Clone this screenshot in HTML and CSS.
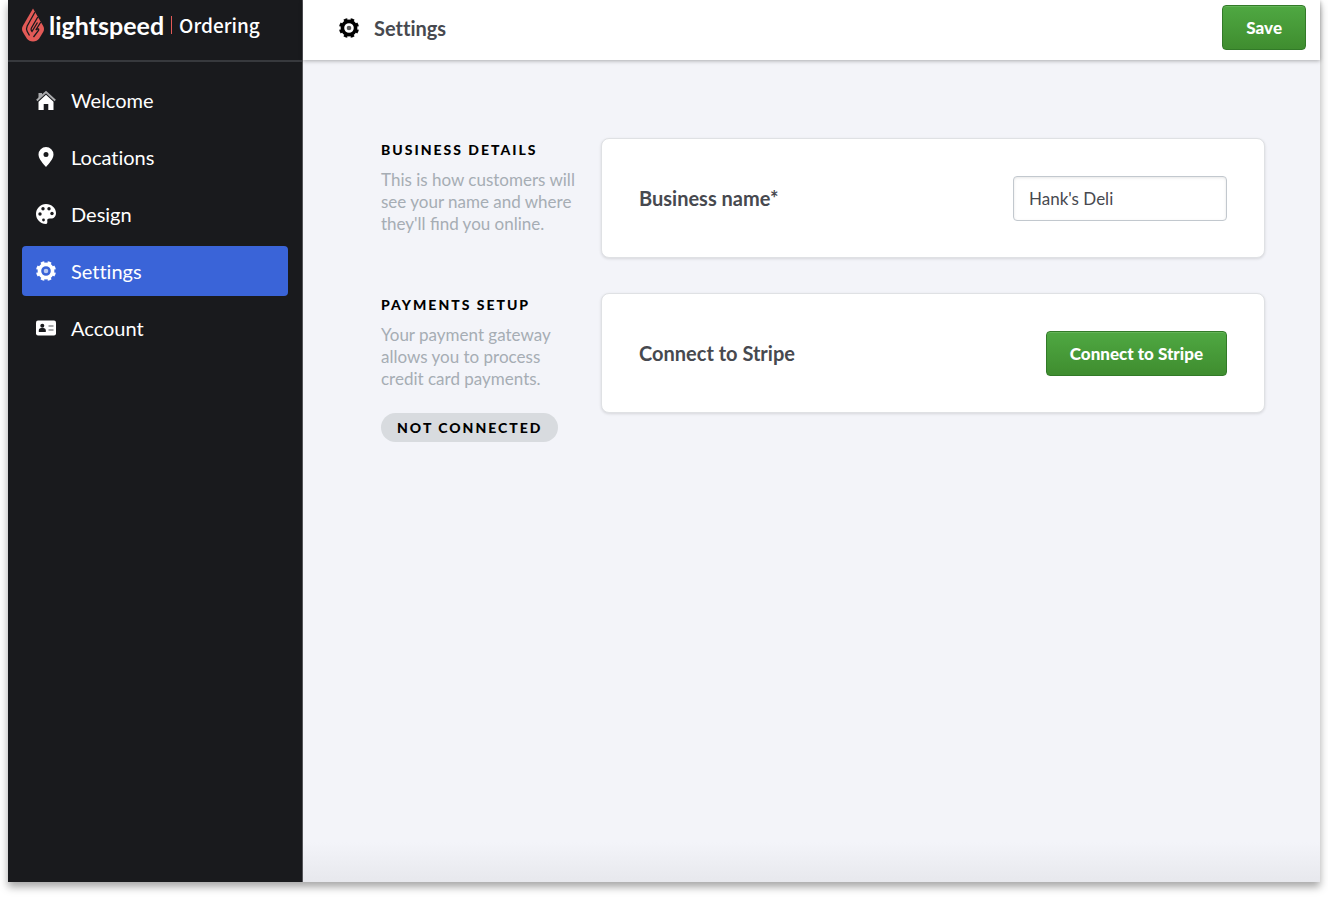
FILE: index.html
```html
<!DOCTYPE html>
<html lang="en">
<head>
<meta charset="utf-8">
<meta name="viewport" content="width=device-width, initial-scale=1">
<title>Settings - Lightspeed Ordering</title>
<link rel="stylesheet" href="styles.css">
</head>
<body>
<svg class="sprite" aria-hidden="true">
  <symbol id="gear" viewBox="0 0 20 20">
    <g fill="none" stroke="currentColor">
      <circle cx="10" cy="10" r="6.600" stroke-width="3.600"/>
      <circle cx="10" cy="10" r="8.700" stroke-width="2.600" pathLength="16" stroke-dasharray="1.050 .95" stroke-dashoffset="-.475"/>
    </g>
    <circle cx="10" cy="10" r="2.300" fill="currentColor" opacity=".65"/>
  </symbol>
</svg>
<div class="app">
  <aside class="sidebar">
    <a class="brand" href="#" aria-label="lightspeed Ordering">
      <svg class="flame" viewBox="0 0 22 34" aria-hidden="true">
        <path d="M11 .5 .8 18Q-.8 21 .8 24L4.800 30.500Q7 33.500 11 33.500T17.200 30.500L21.200 24Q22.800 21 21.200 18Z" fill="#e35a57"/>
        <path d="M13 4 5.200 18Q3.800 21 5.200 23.500L7.500 27.500M15.800 9 9.300 20.300Q8.500 22 10 23.500L15.500 14.500M18.800 14 13.800 22Q17.500 19.500 16.500 22.500L11.500 29" fill="none" stroke="#191a1d" stroke-width="1.300"/>
      </svg>
      <span class="wordmark">lightspeed</span>
      <span class="product">Ordering</span>
    </a>
    <nav class="nav" aria-label="Main">
      <a class="nav-item" href="#">
        <svg class="icon" viewBox="0 0 20 20" aria-hidden="true"><path d="M2.500 3H6v3L2.500 9Z" fill="#a9aaac"/><path d="M.8 10.500 10 2l9.200 8.500" fill="none" stroke="#a9aaac" stroke-width="2"/><path d="m10 4.800 7.500 7V20h-5.200v-6H7.700v6H2.500v-8.200Z" fill="#fff"/></svg>
        Welcome
      </a>
      <a class="nav-item" href="#">
        <svg class="icon" viewBox="0 0 20 20" aria-hidden="true"><path fill="#fff" fill-rule="evenodd" d="M10 0a7.500 7.500 0 0 1 7.500 7.500C17.500 12 12.500 17 10 20 7.500 17 2.500 12 2.500 7.500A7.500 7.500 0 0 1 10 0Zm0 5a2.500 2.500 0 1 0 0 5 2.500 2.500 0 0 0 0-5Z"/></svg>
        Locations
      </a>
      <a class="nav-item" href="#">
        <svg class="icon" viewBox="0 0 20 20" aria-hidden="true"><path fill="#fff" d="M10 0C15.500 0 20 4 20 9c0 3.500-2 5.500-5 5.500h-1.500c-2 0-2.500 1.200-2.200 2.500.3 1.800-.3 3-1.300 3C4.500 20 0 15.500 0 10S4.500 0 10 0Z"/><g fill="#191a1d"><circle cx="7" cy="4.800" r="1.700"/><circle cx="13" cy="4.800" r="1.700"/><circle cx="4" cy="10" r="1.700"/><circle cx="16" cy="9.500" r="1.700"/><circle cx="7.500" cy="16" r="1.400"/></g></svg>
        Design
      </a>
      <a class="nav-item active" href="#" aria-current="page">
        <svg class="icon" aria-hidden="true"><use href="#gear"/></svg>
        Settings
      </a>
      <a class="nav-item" href="#">
        <svg class="icon" viewBox="0 0 20 20" aria-hidden="true"><rect y="2.500" width="20" height="15" rx="2" fill="#fff"/><g fill="#191a1d"><circle cx="6.300" cy="7.700" r="2"/><path d="M2.800 14v-1.500q0-2.500 2.500-2.500h2q2.500 0 2.500 2.500V14Z"/></g><path d="M12.500 8h5M12.500 12h5" stroke="#55565a" stroke-width="1.200"/></svg>
        Account
      </a>
    </nav>
  </aside>
  <div class="page">
    <header class="topbar">
      <svg class="icon" aria-hidden="true"><use href="#gear"/></svg>
      <h1 class="title">Settings</h1>
      <button class="button" type="button">Save</button>
    </header>
    <main class="content">
      <section class="section">
        <div class="about">
          <h2 class="heading">Business details</h2>
          <p class="description">This is how customers will see your name and where they'll find you online.</p>
        </div>
        <div class="card">
          <label class="label" for="business-name">Business name*</label>
          <input class="field" id="business-name" type="text" value="Hank's Deli">
        </div>
      </section>
      <section class="section">
        <div class="about">
          <h2 class="heading">Payments setup</h2>
          <p class="description">Your payment gateway allows you to process credit card payments.</p>
          <span class="status">Not connected</span>
        </div>
        <div class="card">
          <span class="label">Connect to Stripe</span>
          <button class="button" type="button">Connect to Stripe</button>
        </div>
      </section>
    </main>
  </div>
</div>
</body>
</html>
```
FILE: styles.css
```css
* { box-sizing: border-box; }

body {
  margin: 0;
  padding: 0 8px 16px;
  min-height: 100vh;
  display: flex;
  background: #fff;
  color: #47494f;
  font-family: Lato, "Liberation Sans", sans-serif;
  font-size: 17px;
}

.sprite { position: absolute; width: 0; height: 0; }

.app {
  flex: 1;
  display: flex;
  box-shadow: 0 5px 8px rgba(0, 0, 0, .35);
}

.sidebar {
  flex: 0 0 295px;
  background: #191a1d;
  border-right: 1px solid #55565a;
}

.brand {
  display: flex;
  align-items: center;
  height: 62px;
  padding: 0 14px 10px;
  border-bottom: 2px solid #37393d;
  color: #fff;
  text-decoration: none;
}

.flame { width: 22px; height: 34px; margin-right: 5px; }

.wordmark { font-size: 25px; font-weight: 700; line-height: 32px; }

.product {
  margin-left: 7px;
  padding-left: 7px;
  border-left: 1px solid #e35a57;
  font-family: "Noto Sans CJK SC", "Noto Sans", sans-serif;
  font-size: 19px;
  font-weight: 500;
  line-height: 18px;
}

.nav {
  display: flex;
  flex-direction: column;
  gap: 7px;
  padding: 13px 14px;
}

.nav-item {
  display: flex;
  align-items: center;
  gap: 15px;
  height: 50px;
  padding: 0 14px;
  border-radius: 4px;
  color: #fff;
  font-size: 20px;
  font-variant-ligatures: none;
  text-decoration: none;
}

.nav-item.active { background: #3a64d8; }

.icon { flex: none; width: 20px; height: 20px; }

.page {
  flex: 1;
  display: flex;
  flex-direction: column;
  min-width: 0;
  background: linear-gradient(to top, #e7e8ed, #f3f4f9 40px);
}

.topbar {
  display: flex;
  align-items: center;
  gap: 15px;
  height: 60px;
  padding: 0 14px 5px 36px;
  background: #fff;
  box-shadow: 0 1px 4px rgba(0, 0, 0, .3);
  color: #000;
}

.title {
  flex: 1;
  margin: 0;
  color: #47494f;
  font-size: 20px;
  font-weight: 700;
  font-variant-ligatures: none;
}

.button {
  height: 45px;
  padding: 0 23px;
  border: 1px solid #327a28;
  border-radius: 4px;
  background: linear-gradient(#4fa842, #3f8d2f);
  box-shadow: inset 0 1px 0 #64b458;
  color: #fff;
  font: 900 17px Lato, sans-serif;
}

.content {
  display: flex;
  flex-direction: column;
  gap: 35px;
  padding: 78px 55px 40px 78px;
}

.section { display: flex; align-items: flex-start; }

.about { flex: 0 0 220px; padding-right: 20px; }

.heading {
  margin: 0;
  color: #000;
  font-size: 14px;
  font-weight: 900;
  letter-spacing: 2px;
  line-height: 24px;
  text-transform: uppercase;
}

.description { margin: 7px 0 0; color: #a6adb4; line-height: 22px; }

.status {
  display: inline-block;
  margin-top: 23px;
  padding: 0 16px;
  border-radius: 15px;
  background: #d8dbdf;
  color: #000;
  font-size: 14px;
  font-weight: 900;
  letter-spacing: 2px;
  line-height: 29px;
  text-transform: uppercase;
}

.card {
  flex: 1;
  display: flex;
  align-items: center;
  justify-content: space-between;
  gap: 20px;
  min-height: 120px;
  padding: 0 37px;
  border: 1px solid #dfe1e4;
  border-radius: 8px;
  background: #fff;
  box-shadow: 0 1px 3px rgba(0, 0, 0, .12);
}

.label { font-size: 20px; font-weight: 700; }

.field {
  width: 214px;
  height: 45px;
  padding: 0 15px;
  border: 1px solid #c2c8ce;
  border-radius: 4px;
  background: #fff;
  box-shadow: inset 0 1px 3px rgba(0, 0, 0, .1);
  color: #47494f;
  font: 17px Lato, sans-serif;
}
```
